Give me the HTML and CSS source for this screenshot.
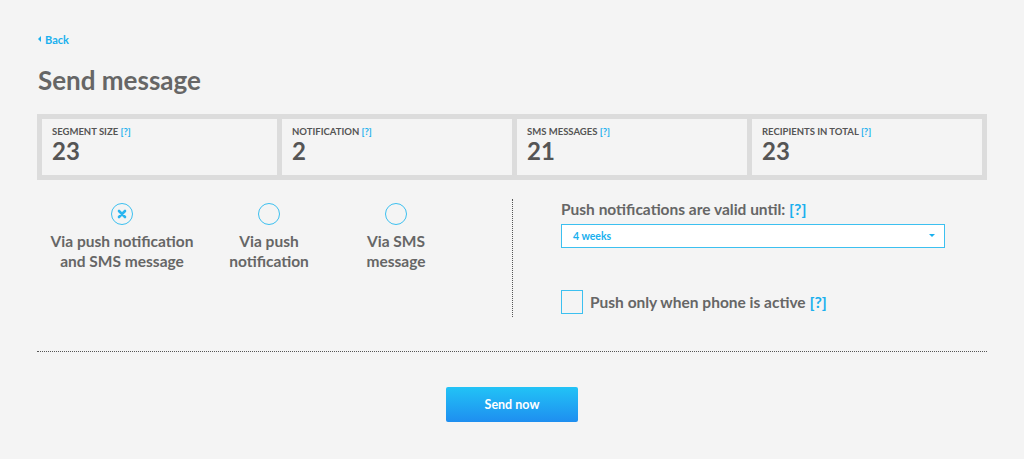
FILE: index.html
```html
<!DOCTYPE html>
<html lang="en">
<head>
    <meta charset="UTF-8">
    <title>Send message</title>
    <link rel="stylesheet" href="styles.css">
</head>
<body>
    <main class="page">
        <a class="back-link" href="#"><span class="back-arrow"></span>Back</a>
        <h1 class="page-title">Send message</h1>

        <div class="stats">
            <div class="stat">
                <div class="stat-label">Segment size <span class="help">[?]</span></div>
                <div class="stat-value">23</div>
            </div>
            <div class="stat">
                <div class="stat-label">Notification <span class="help">[?]</span></div>
                <div class="stat-value">2</div>
            </div>
            <div class="stat">
                <div class="stat-label">SMS messages <span class="help">[?]</span></div>
                <div class="stat-value">21</div>
            </div>
            <div class="stat">
                <div class="stat-label">Recipients in total <span class="help">[?]</span></div>
                <div class="stat-value">23</div>
            </div>
        </div>

        <div class="options">
            <div class="channels">
                <label class="channel channel-wide">
                    <span class="radio">
                        <svg width="12" height="12" viewBox="0 0 12 12"><path d="M3 3 L9 9 M9 3 L3 9" stroke="#2cb5f0" stroke-width="2.6" stroke-linecap="round"/></svg>
                    </span>
                    <span class="channel-text">Via push notification and SMS message</span>
                </label>
                <label class="channel channel-mid">
                    <span class="radio"></span>
                    <span class="channel-text">Via push notification</span>
                </label>
                <label class="channel channel-narrow">
                    <span class="radio"></span>
                    <span class="channel-text">Via SMS message</span>
                </label>
            </div>
            <div class="settings">
                <div class="field-label">Push notifications are valid until: <span class="help">[?]</span></div>
                <div class="select">
                    <span>4 weeks</span>
                    <span class="caret"></span>
                </div>
                <label class="check">
                    <span class="check-box"></span>
                    <span>Push only when phone is active <span class="help">[?]</span></span>
                </label>
            </div>
        </div>

        <div class="actions">
            <button class="send-button">Send now</button>
        </div>
    </main>
</body>
</html>
```

FILE: styles.css
```css
body {
    margin: 0;
    padding: 0;
    background: #f4f4f4;
    font-family: 'Lato', 'Open Sans', sans-serif;
    color: #666;
}
.page {
    width: 950px;
    margin: 0 0 0 37px;
    padding-top: 26px;
}
.back-link {
    display: inline-flex;
    align-items: center;
    gap: 4px;
    margin-left: 1px;
    color: #1ab0ee;
    font-size: 11px;
    font-weight: bold;
    text-decoration: none;
}
.back-arrow {
    width: 0;
    height: 0;
    border-top: 3px solid transparent;
    border-bottom: 3px solid transparent;
    border-right: 3px solid #1ab0ee;
}
.page-title {
    margin: 19px 0 0 1px;
    font-size: 26px;
    font-weight: bold;
    color: #666;
    line-height: 30px;
}
.stats {
    display: grid;
    grid-template-columns: 235px 230px 230px 230px;
    gap: 5px;
    margin-top: 19px;
    padding: 5px;
    background: #dcdcdc;
}
.stat {
    background: #f4f4f4;
    height: 56px;
    padding: 7px 10px 0;
    box-sizing: border-box;
}
.stat-label {
    font-size: 9.5px;
    font-weight: bold;
    text-transform: uppercase;
    color: #555;
    line-height: 12px;
}
.stat-value {
    font-size: 24px;
    font-weight: bold;
    color: #555;
    line-height: 26px;
}
.help {
    color: #1ab0ee;
}
.options {
    display: flex;
    margin-top: 19px;
}
.channels {
    width: 476px;
    height: 118px;
    display: flex;
    padding-top: 4px;
    border-right: 1px dotted #555;
    box-sizing: border-box;
}
.channel {
    display: flex;
    flex-direction: column;
    align-items: center;
    text-align: center;
    font-size: 15.5px;
    font-weight: bold;
    line-height: 20px;
    color: #666;
}
.channel-wide { width: 170px; }
.channel-mid { width: 100px; margin-left: 12px; }
.channel-narrow { width: 90px; margin-left: 32px; }
.radio {
    width: 20px;
    height: 20px;
    border: 1.5px solid #3cc0f0;
    border-radius: 50%;
    display: flex;
    align-items: center;
    justify-content: center;
    margin-bottom: 6px;
}
.settings {
    padding-left: 48px;
}
.field-label {
    font-size: 15.5px;
    font-weight: bold;
    color: #666;
    line-height: 20px;
}
.field-label .help,
.check .help {
    font-size: 16px;
}
.select {
    width: 384px;
    height: 24px;
    margin-top: 5px;
    background: #fff;
    border: 1px solid #3cc0f0;
    box-sizing: border-box;
    display: flex;
    align-items: center;
    justify-content: space-between;
    padding: 0 9px 0 11px;
    font-size: 10.5px;
    font-weight: bold;
    color: #1ab0ee;
}
.caret {
    width: 0;
    height: 0;
    border-left: 3px solid transparent;
    border-right: 3px solid transparent;
    border-top: 3px solid #1ab0ee;
}
.check {
    display: flex;
    align-items: center;
    gap: 7px;
    margin-top: 42px;
    font-size: 15.5px;
    font-weight: bold;
    color: #666;
}
.check-box {
    width: 22px;
    height: 24px;
    border: 1px solid #3cc0f0;
    box-sizing: border-box;
}
.actions {
    margin-top: 34px;
    border-top: 1px dotted #555;
    display: flex;
    justify-content: center;
    padding-top: 35px;
}
.send-button {
    width: 132px;
    height: 35px;
    border: none;
    border-radius: 2px;
    background: linear-gradient(#22c3f6, #1e8ef0);
    color: #fff;
    font-family: inherit;
    font-size: 12.5px;
    font-weight: bold;
    cursor: pointer;
}
```
